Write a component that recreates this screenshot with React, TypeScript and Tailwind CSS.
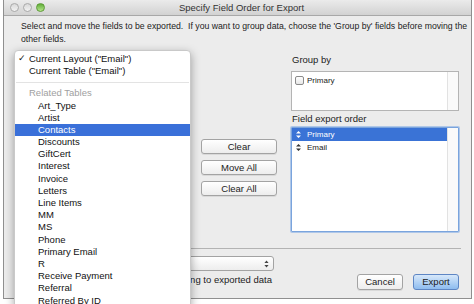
import React from "react";

const font = { fontFamily: '"Liberation Sans", Arial, sans-serif' };

const relatedTables = [
  "Art_Type",
  "Artist",
  "Contacts",
  "Discounts",
  "GiftCert",
  "Interest",
  "Invoice",
  "Letters",
  "Line Items",
  "MM",
  "MS",
  "Phone",
  "Primary Email",
  "R",
  "Receive Payment",
  "Referral",
  "Referred By ID",
];

const MacButton = ({ label, className = "" }: { label: string; className?: string }) => (
  <div
    className={
      "flex h-[15px] items-center justify-center rounded-[3px] border border-[#a3a3a3] bg-gradient-to-b from-white to-[#ededed] text-[9.5px] leading-none text-[#222] shadow-[0_1px_0_rgba(0,0,0,0.08)] " +
      className
    }
  >
    {label}
  </div>
);

const Handle = ({ light }: { light?: boolean }) => (
  <svg width="5" height="7" viewBox="0 0 5 7" className="shrink-0">
    <path d="M2.5 0 L5 2.6 H0 Z M2.5 7 L5 4.4 H0 Z" fill={light ? "#fff" : "#333"} />
  </svg>
);

export default function App() {
  return (
    <div className="relative h-[304px] w-[474px] overflow-hidden bg-white" style={font}>
      {/* dialog window */}
      <div className="ml-[3px] flex h-[299px] w-[469px] flex-col border-x border-b border-[#8f8f8f] bg-[#ececec]">
        {/* title bar */}
        <div className="grid h-[16px] shrink-0 grid-cols-[1fr_auto_1fr] items-center border-b border-[#a8a8a8] bg-gradient-to-b from-[#ebebeb] to-[#d2d2d2] pl-[6px]">
          <div className="flex gap-[4px]">
            <span className="h-[9px] w-[9px] rounded-full border border-[#a9a9a9] bg-gradient-to-b from-[#d9d9d9] to-[#f2f2f2]" />
            <span className="h-[9px] w-[9px] rounded-full border border-[#a9a9a9] bg-gradient-to-b from-[#d9d9d9] to-[#f2f2f2]" />
            <span className="h-[9px] w-[9px] rounded-full border border-[#5c9a36] bg-gradient-to-b from-[#5fae35] to-[#b5e58b]" />
          </div>
          <div className="pl-[2px] text-[9.5px] leading-none text-[#333]">Specify Field Order for Export</div>
          <div />
        </div>

        {/* body */}
        <div className="flex flex-1 flex-col pl-[11px] pr-[12px]">
          <p className="mt-[4px] whitespace-nowrap pl-[6px] text-[8.7px] leading-[13px] text-[#222]">
            Select and move the fields to be exported.&nbsp; If you want to group data, choose the 'Group by' fields before moving the
            <br />
            other fields.
          </p>

          <div className="mt-[8px] flex">
            {/* available fields (under the popup menu) */}
            <div className="h-[178px] w-[177px] shrink-0" />

            {/* middle buttons */}
            <div className="ml-[9px] mt-[85px] flex w-[76px] flex-col gap-[6px]">
              <MacButton label="Clear" />
              <MacButton label="Move All" />
              <MacButton label="Clear All" />
            </div>

            {/* right column */}
            <div className="ml-[14px] flex w-[168px] flex-col">
              <div className="text-[9.5px] leading-[12px] text-[#222]">
                <span className="pl-[1px]">Group by</span>
              </div>
              <div className="mt-[5px] flex h-[40px] border border-[#b4b4b4] bg-white">
                <div className="flex flex-1 items-start gap-[3px] pl-[3px] pt-[3px]">
                  <span className="mt-[1px] h-[9px] w-[9px] rounded-[2px] border border-[#8a8a8a] bg-gradient-to-b from-white to-[#e6e6e6]" />
                  <span className="text-[8px] leading-[11px] text-[#222]">Primary</span>
                </div>
                <div className="w-[11px] border-l border-[#e2e2e2] bg-[#fafafa]" />
              </div>

              <div className="mt-[2px] text-[9.5px] leading-[12px] text-[#222]">
                <span className="pl-[1px]">Field export order</span>
              </div>
              <div className="mt-[2px] flex h-[105px] rounded-[1px] border border-[#7aa4dd] bg-white shadow-[0_0_0_1px_rgba(126,170,230,0.55)]">
                <div className="flex flex-1 flex-col">
                  <div className="flex h-[13px] items-center gap-[6px] bg-[#3a73d6] pl-[4px] text-[8px] text-white">
                    <Handle light />
                    <span>Primary</span>
                  </div>
                  <div className="flex h-[13px] items-center gap-[6px] pl-[4px] text-[8px] text-[#222]">
                    <Handle />
                    <span>Email</span>
                  </div>
                </div>
                <div className="w-[11px] border-l border-[#e2e2e2] bg-[#fafafa]" />
              </div>
            </div>
          </div>

          {/* separator */}
          <div className="mt-[16px] h-px w-[446px] bg-[#b3b3b3]" />

          {/* bottom area */}
          <div className="mt-[7px] flex items-start">
            <div className="flex w-[259px] flex-col items-end">
              <div className="flex h-[15px] w-full items-center justify-between rounded-[3px] border border-[#a3a3a3] bg-gradient-to-b from-white to-[#ededed] pl-[3px] pr-[4px] text-[9.5px] text-[#222]">
                <span>Windows (ANSI)</span>
                <svg width="5" height="8" viewBox="0 0 5 8">
                  <path d="M2.5 0.5 L4.6 3 H0.4 Z M2.5 7.5 L4.6 5 H0.4 Z" fill="#444" />
                </svg>
              </div>
              <div className="mt-[3px] flex items-center gap-[4px] pr-[2px] text-[9.5px] leading-[12px] text-[#222]">
                <span className="h-[10px] w-[10px] rounded-[2px] border border-[#8a8a8a] bg-white" />
                <span>Apply current layout's data formatting to exported data</span>
              </div>
            </div>
            <div className="ml-auto mt-[18px] flex gap-[10px]">
              <MacButton label="Cancel" className="h-[16px] w-[46px]" />
              <div className="flex h-[16px] w-[46px] items-center justify-center rounded-[3px] border border-[#5e86c4] bg-gradient-to-b from-[#d7e8fa] to-[#8ebcef] text-[9.5px] text-[#1a1a1a]">
                Export
              </div>
            </div>
          </div>
        </div>
      </div>

      {/* popup menu over the field list */}
      <div className="absolute left-[14px] top-[50px] w-[177px] rounded-[4px] border border-[#c9c9c9] bg-white pt-[2px] shadow-[0_3px_10px_rgba(0,0,0,0.35)]">
        <div className="flex h-[12.2px] items-center text-[9.5px] text-[#111]">
          <span className="w-[14px] pl-[3px] text-[9px]">✓</span>
          <span>Current Layout ("Email")</span>
        </div>
        <div className="flex h-[12.2px] items-center pl-[14px] text-[9.5px] text-[#111]">Current Table ("Email")</div>
        <div className="mx-[1px] mb-[4px] mt-[5px] h-px bg-[#e3e3e3]" />
        <div className="flex h-[12.2px] items-center pl-[14px] text-[9.5px] text-[#a0a0a0]">Related Tables</div>
        {relatedTables.map((name) => (
          <div
            key={name}
            className={
              "flex h-[12.2px] items-center pl-[23px] text-[9.5px] " +
              (name === "Contacts" ? "bg-[#3a70d9] text-white" : "text-[#111]")
            }
          >
            {name}
          </div>
        ))}
      </div>
    </div>
  );
}
